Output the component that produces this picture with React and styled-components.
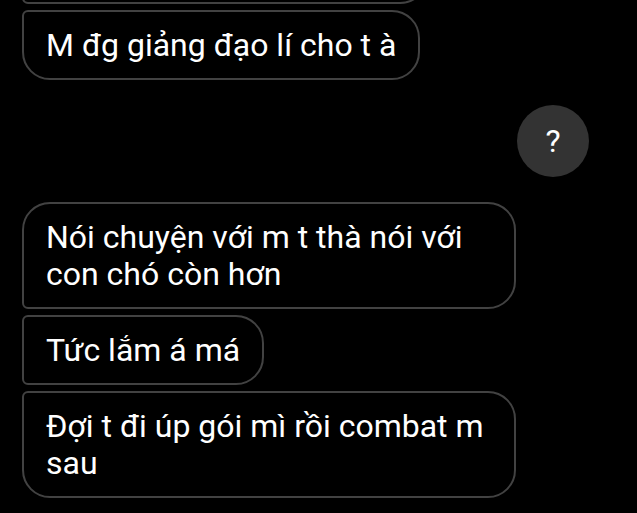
import React from "react";
import styled, { createGlobalStyle, css } from "styled-components";

const GlobalStyle = createGlobalStyle`
  html, body {
    margin: 0;
    padding: 0;
    background: #000;
    overflow: hidden;
  }
  body {
    font-family: Roboto, "Noto Sans", "DejaVu Sans", sans-serif;
  }
`;

const Screen = styled.div`
  width: 637px;
  height: 513px;
  background: #000;
  overflow: hidden;
`;

const Thread = styled.div`
  display: flex;
  flex-direction: column;
  gap: 25px;
  margin-top: -66px;
  padding: 0 48px 0 22px;
`;

const Group = styled.div`
  display: flex;
  flex-direction: column;
  align-items: ${(p) => (p.$out ? "flex-end" : "flex-start")};
  gap: 6px;
`;

const BIG = 28;
const SMALL = 6;

const radii = {
  first: css`border-radius: ${BIG}px ${BIG}px ${BIG}px ${SMALL}px;`,
  middle: css`border-radius: ${SMALL}px ${BIG}px ${BIG}px ${SMALL}px;`,
  last: css`border-radius: ${SMALL}px ${BIG}px ${BIG}px ${BIG}px;`,
};

const Bubble = styled.div`
  box-sizing: border-box;
  max-width: 494px;
  padding: 15px 22px 14px 22px;
  border: 2px solid #424242;
  background: #000;
  color: #fff;
  font-family: Roboto, "Noto Sans", sans-serif;
  font-size: 32px;
  line-height: 37px;
  letter-spacing: 0;
  ${(p) => radii[p.$pos]}
  ${(p) => p.$width && css`width: ${p.$width}px;`}
`;

const Circle = styled.div`
  width: 72px;
  height: 72px;
  border-radius: 50%;
  background: #333333;
  color: #fff;
  display: flex;
  align-items: center;
  justify-content: center;
  font-family: Roboto, "Noto Sans", sans-serif;
  font-size: 32px;
  line-height: 1;
`;

export default function App() {
  return (
    <Screen>
      <GlobalStyle />
      <Thread>
        <Group>
          <Bubble $pos="middle" $width={406} aria-hidden="true">
            {"\u00a0"}
          </Bubble>
          <Bubble $pos="last">M đg giảng đạo lí cho t à</Bubble>
        </Group>
        <Group $out>
          <Circle>?</Circle>
        </Group>
        <Group>
          <Bubble $pos="first">Nói chuyện với m t thà nói với con chó còn hơn</Bubble>
          <Bubble $pos="middle">Tức lắm á má</Bubble>
          <Bubble $pos="last">Đợi t đi úp gói mì rồi combat m sau</Bubble>
        </Group>
      </Thread>
    </Screen>
  );
}
